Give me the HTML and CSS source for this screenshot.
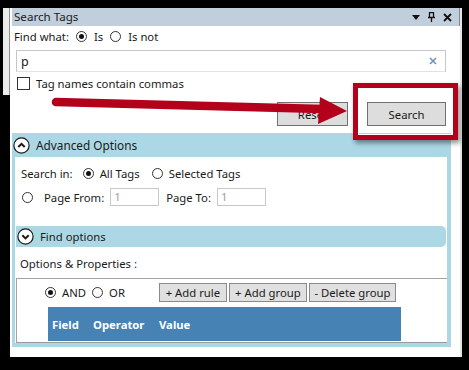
FILE: index.html
```html
<!DOCTYPE html>
<html lang="en">
<head>
<meta charset="UTF-8">
<title>Search Tags</title>
<link rel="stylesheet" href="styles.css">
</head>
<body>
<div class="screen">
  <div class="strip"></div>
  <div class="panel">
    <div class="titlebar">
      <span>Search Tags</span>
      <span class="tools">
        <svg width="8" height="5" viewBox="0 0 8 5"><polygon points="0,0 8,0 4,5" fill="#111"/></svg>
        <svg width="7" height="10" viewBox="0 0 7 10"><path d="M1.5 0.5h4v5h-4z M0 5.5h7 M3.5 5.5v4.5" stroke="#111" stroke-width="1.3" fill="none"/></svg>
        <svg width="9" height="9" viewBox="0 0 9 9"><path d="M1 1l7 7M8 1l-7 7" stroke="#111" stroke-width="1.8"/></svg>
      </span>
    </div>

    <div class="findrow">
      <span>Find what:</span>
      <span class="radio on"></span><span>Is</span>
      <span class="radio"></span><span>Is not</span>
    </div>

    <div class="searchbox">
      <span>p</span>
      <svg width="8" height="8" viewBox="0 0 8 8"><path d="M1 1l6 6M7 1l-6 6" stroke="#6f93bd" stroke-width="1.6"/></svg>
    </div>

    <div class="checkrow">
      <span class="check"></span>
      <span>Tag names contain commas</span>
    </div>

    <div class="actions">
      <button class="btn reset">Reset</button>
      <button class="btn search">Search</button>
    </div>

    <div class="section">
      <div class="section-head">
        <svg class="circ" width="17" height="17" viewBox="0 0 17 17"><circle cx="8.5" cy="8.5" r="7.6" fill="#fff" stroke="#1a1a1a" stroke-width="1.2"/><polyline points="5.3,10 8.5,6.8 11.7,10" fill="none" stroke="#1a1a1a" stroke-width="2"/></svg>
        <span>Advanced Options</span>
      </div>
      <div class="section-body">
        <div class="optrow">
          <span class="lbl-search">Search in:</span>
          <span class="radio on"></span><span>All Tags</span>
          <span class="radio gap"></span><span>Selected Tags</span>
        </div>
        <div class="optrow pages">
          <span class="radio"></span><span class="lbl-from">Page From:</span>
          <span class="num">1</span>
          <span class="lbl-to">Page To:</span>
          <span class="num">1</span>
        </div>

        <div class="find-head">
          <svg class="circ" width="17" height="17" viewBox="0 0 17 17"><circle cx="8.5" cy="8.5" r="7.6" fill="#fff" stroke="#1a1a1a" stroke-width="1.2"/><polyline points="5.3,7.2 8.5,10.4 11.7,7.2" fill="none" stroke="#1a1a1a" stroke-width="2"/></svg>
          <span>Find options</span>
        </div>

        <div class="props">Options &amp; Properties :</div>

        <div class="rules">
          <div class="rules-top">
            <span class="radio on"></span><span>AND</span>
            <span class="radio"></span><span>OR</span>
            <span class="rule-btns">
              <button class="btn small add-rule">+ Add rule</button>
              <button class="btn small add-group">+ Add group</button>
              <button class="btn small del-group">- Delete group</button>
            </span>
          </div>
          <div class="grid-head">
            <span class="col-field">Field</span>
            <span class="col-op">Operator</span>
            <span>Value</span>
          </div>
        </div>
      </div>
    </div>
  </div>

  <!-- annotation drawn over the dialog -->
  <svg class="arrow" width="469" height="370" viewBox="0 0 469 370">
    <line x1="56" y1="102" x2="322" y2="109" stroke="#b3001b" stroke-width="8.5" stroke-linecap="round"/>
    <polygon points="320,97 347,111 318,124" fill="#b3001b"/>
  </svg>
  <div class="highlight"></div>
</div>
</body>
</html>
```

FILE: styles.css
```css
body {
  margin: 0;
  background: #000;
  font-family: "Noto Sans", sans-serif;
  font-size: 11.3px;
  color: #1a1a1a;
}

.screen {
  position: relative;
  width: 469px;
  height: 370px;
  display: flex;
  align-items: flex-start;
  padding-top: 8px;
  box-sizing: border-box;
  overflow: hidden;
}

.strip {
  width: 6px;
  height: 87px;
  margin-left: 3px;
  background: #ececec;
  border-right: 1px solid #8e8e8e;
}

.panel {
  width: 450px;
  height: 349px;
  background: #fff;
  border-right: 2px solid #e4e4e4;
}

.titlebar {
  height: 18px;
  margin-left: 2px;
  padding: 0 7px 0 2px;
  background: #c1cfdc;
  border-right: 1px solid #7e8a96;
  display: flex;
  align-items: center;
  justify-content: space-between;
  line-height: 18px;
  font-size: 11.6px;
}

.tools {
  display: flex;
  align-items: center;
  gap: 8px;
}

.findrow {
  height: 19px;
  margin-top: 1px;
  padding-left: 4px;
  display: flex;
  align-items: center;
  gap: 7px;
}

.findrow .radio:first-of-type { margin-left: -1px; }

.radio {
  width: 11px;
  height: 11px;
  border: 1px solid #333;
  border-radius: 50%;
  box-sizing: border-box;
  display: inline-flex;
  align-items: center;
  justify-content: center;
  flex: none;
}

.radio.on::after {
  content: "";
  width: 5px;
  height: 5px;
  border-radius: 50%;
  background: #111;
}

.searchbox {
  width: 430px;
  height: 22px;
  margin: 4px 0 0 6px;
  padding: 0 8px 0 4px;
  box-sizing: border-box;
  border: 1px solid #c3c7cc;
  border-bottom-color: #dbe3ec;
  display: flex;
  align-items: center;
  justify-content: space-between;
  font-size: 12.5px;
}

.checkrow {
  margin: 5px 0 0 7px;
  display: flex;
  align-items: center;
  gap: 6px;
  height: 13px;
}

.check {
  width: 13px;
  height: 13px;
  border: 1px solid #333;
  box-sizing: border-box;
}

.actions {
  margin-top: 12px;
  padding-right: 14px;
  display: flex;
  justify-content: flex-end;
  gap: 19px;
}

.btn {
  font-family: inherit;
  font-size: 11.3px;
  color: #1a1a1a;
  background: #dddddd;
  border: 1px solid #707070;
  padding: 0;
}

.reset { width: 71px; height: 24px; }
.search { width: 79px; height: 24px; }

.section {
  width: 439px;
  height: 214px;
  margin: 7px 0 0 2px;
  background: #acd8e5;
  display: flex;
  flex-direction: column;
}

.section-head {
  height: 24px;
  padding-left: 1px;
  display: flex;
  align-items: center;
  gap: 6px;
  font-size: 11.8px;
}

.section-body {
  flex: 1;
  margin: 0 4px 4px 3px;
  background: #fff;
  display: flex;
  flex-direction: column;
}

.optrow {
  height: 18px;
  margin-top: 7px;
  padding-left: 6px;
  display: flex;
  align-items: center;
  gap: 6px;
}

.lbl-search { margin-right: 4px; }
.radio.gap { margin-left: 6px; }

.pages {
  margin-top: 6px;
  padding-left: 7px;
}

.lbl-from { margin-left: 5px; }
.lbl-to { margin-left: 1px; }

.num {
  width: 49px;
  height: 18px;
  box-sizing: border-box;
  border: 1px solid #c8c8c8;
  padding-left: 3px;
  color: #a0a0a0;
  line-height: 16px;
}

.find-head {
  width: 430px;
  height: 21px;
  margin: 20px 0 0 1px;
  background: #acd8e5;
  border-radius: 0 5px 5px 0;
  display: flex;
  align-items: center;
  gap: 6px;
  padding-left: 1px;
  box-sizing: border-box;
}

.props {
  margin: 9px 0 0 5px;
  height: 16px;
  line-height: 16px;
}

.rules {
  flex: 1;
  margin: 6px 0 0 1px;
  border: 1px solid #a2a2a2;
  border-right: none;
  border-bottom-color: #9a9a9a;
}

.rules-top {
  height: 19px;
  margin-top: 4px;
  padding-left: 28px;
  display: flex;
  align-items: center;
  gap: 6px;
}

.rules-top .radio:nth-of-type(2) { margin-left: 4px; }

.rule-btns {
  margin-left: 28px;
  display: flex;
  gap: 2px;
  align-self: flex-end;
  margin-top: 4px;
}

.btn.small {
  height: 19px;
  border-color: #8a8a8a;
  background: #e0e0e0;
}

.add-rule { width: 68px; }
.add-group { width: 78px; }
.del-group { width: 87px; }

.grid-head {
  width: 353px;
  height: 34px;
  margin: 5px 0 0 31px;
  background: #4682b4;
  color: #fff;
  font-weight: bold;
  display: flex;
  align-items: center;
  padding-left: 4px;
  box-sizing: border-box;
}

.col-field { width: 41px; }
.col-op { width: 66px; }

.arrow {
  position: absolute;
  left: 0;
  top: 0;
  pointer-events: none;
}

.highlight {
  position: absolute;
  left: 353px;
  top: 83px;
  width: 105px;
  height: 57px;
  box-sizing: border-box;
  border: 5px solid #b3001b;
  box-shadow: 2px 3px 5px rgba(0, 0, 0, 0.45), inset 0 0 0 1px #fff;
}
```
